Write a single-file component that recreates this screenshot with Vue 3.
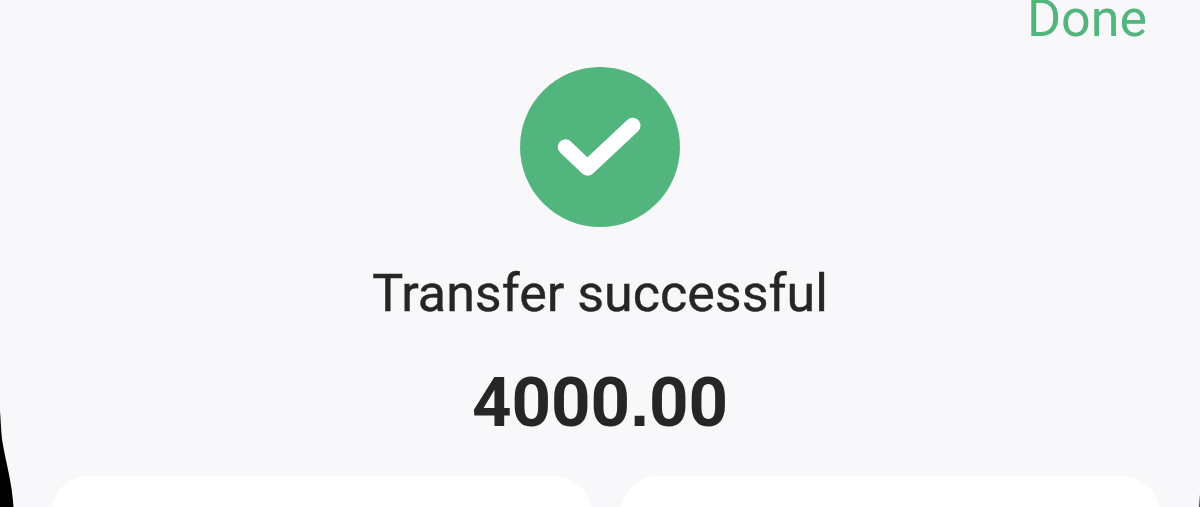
<template>
	<div class="page">
		<header class="topbar">
			<button class="done" type="button">Done</button>
		</header>
		<main class="result">
			<svg class="icon" viewBox="0 0 160 160" aria-hidden="true">
				<circle cx="80" cy="80" r="80" />
				<path d="M45.5 80 L67.5 101 L112.8 58.5" />
			</svg>
			<h1 class="title">{{ title }}</h1>
			<p class="amount">{{ whole }}<span class="point">.</span>{{ cents }}</p>
		</main>
		<div class="cards">
			<div v-for="card in 2" :key="card" class="card"></div>
		</div>
		<!-- dark shape behind the sheet, visible at both edges -->
		<svg class="edge" viewBox="0 0 1200 507" aria-hidden="true">
			<path d="M0 411 C1 424 1 434 3 445 C6 463 12 482 13.5 507 L0 507 Z" />
			<path class="right" d="M1200 494 L1198.8 507 L1200 507 Z" />
		</svg>
	</div>
</template>

<script setup>
	import { ref, computed } from "vue";

	const title = ref("Transfer successful");
	const amount = ref(4000);

	const whole = computed(() => amount.value.toFixed(2).split(".")[0]);
	const cents = computed(() => amount.value.toFixed(2).split(".")[1]);
</script>

<style>
	body {
		margin: 0;
		background-color: #f8f8fb;
	}
</style>

<style scoped>
	.page {
		position: relative;
		height: 507px;
		overflow: hidden;
		background-color: #f8f8fb;
		font-family: Roboto, "Liberation Sans", sans-serif;
		color: #262626;
	}
	.topbar {
		display: flex;
		justify-content: flex-end;
		height: 67px;
		padding-right: 53px;
		box-sizing: border-box;
	}
	.done {
		height: 60px;
		margin-top: -11px;
		padding: 0;
		border: none;
		background: none;
		font-family: inherit;
		font-size: 52px;
		line-height: 60px;
		color: #52b57d;
		cursor: pointer;
	}
	.result {
		display: flex;
		flex-direction: column;
		align-items: center;
		height: 409px;
	}
	.icon {
		width: 160px;
		height: 160px;
	}
	.icon circle {
		fill: #52b57d;
	}
	.icon path {
		fill: none;
		stroke: #fff;
		stroke-width: 15.5;
		stroke-linecap: round;
		stroke-linejoin: round;
	}
	.title {
		margin: 37px 0 0;
		font-size: 52px;
		font-weight: 400;
		line-height: 60px;
		-webkit-text-stroke: 0.4px #262626;
	}
	.amount {
		margin: 39px 0 0;
		font-size: 69px;
		font-weight: 700;
		line-height: 80px;
		letter-spacing: -0.1px;
	}
	.point {
		font-family: "Liberation Sans", sans-serif;
		line-height: 1;
	}
	.cards {
		display: grid;
		grid-template-columns: 1fr 1fr;
		gap: 30px;
		padding: 0 41px 0 52px;
	}
	.card {
		height: 100px;
		border-radius: 36px;
		background-color: #fff;
	}
	.edge {
		position: absolute;
		inset: 0;
		width: 1200px;
		height: 507px;
		pointer-events: none;
	}
	.edge .right {
		fill: #555;
	}
</style>
